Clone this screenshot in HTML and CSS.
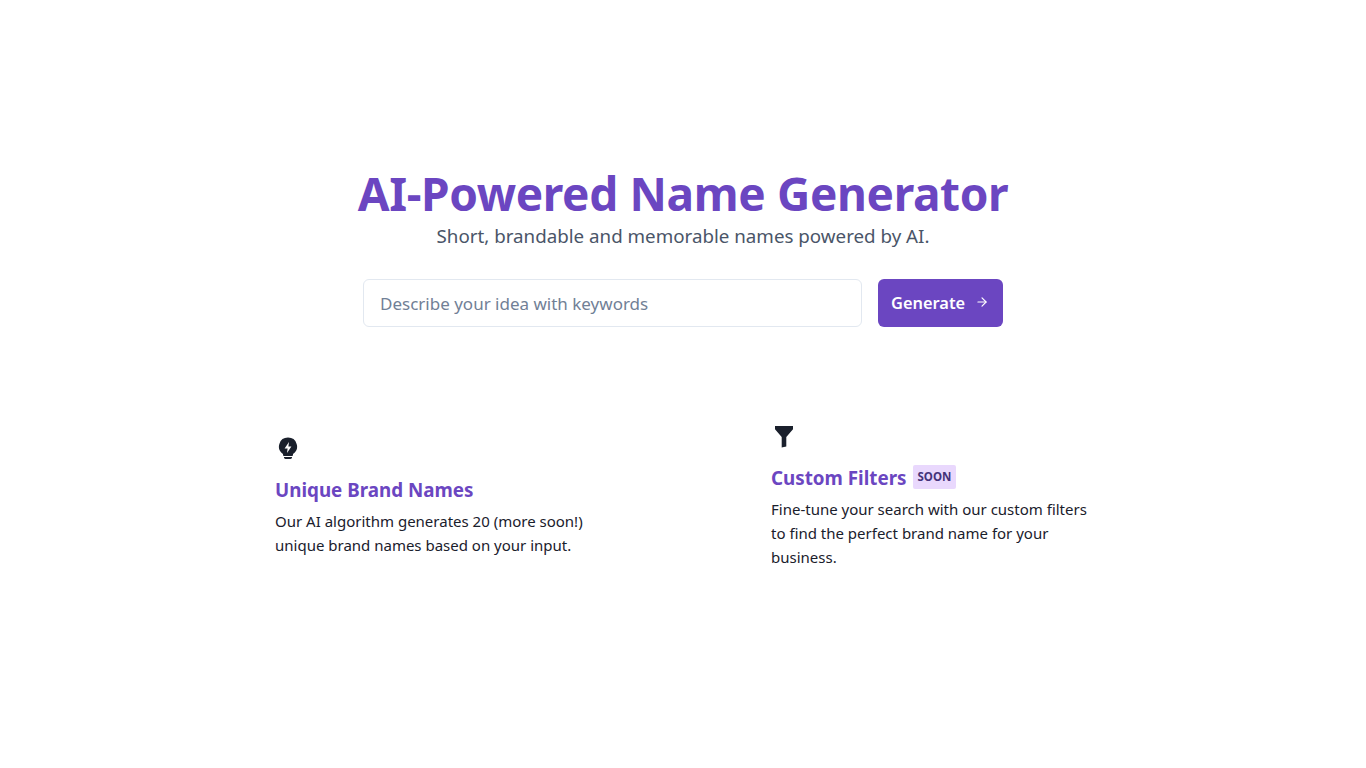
FILE: index.html
```html
<!DOCTYPE html>
<html lang="en">
<head>
<meta charset="UTF-8">
<meta name="viewport" content="width=device-width, initial-scale=1.0">
<title>AI-Powered Name Generator</title>
<link rel="stylesheet" href="styles.css">
</head>
<body>

<main class="page">
<section class="hero">
<h1>AI-Powered Name Generator</h1>
<p class="tagline">Short, brandable and memorable names powered by AI.</p>
<form class="search">
<input type="text" placeholder="Describe your idea with keywords">
<button type="button">Generate
<svg viewBox="0 0 24 24" width="14" height="14" fill="none" stroke="currentColor" stroke-width="2" stroke-linecap="round" stroke-linejoin="round"><path d="M5 12h14"/><path d="M12 5l7 7-7 7"/></svg>
</button>
</form>
</section>

<section class="features">
<div class="feature">
<svg class="icon" viewBox="-1 0 24 24" width="24" height="24" fill="currentColor"><path d="M12 1.5a9 9 0 0 0-5 16.5v1a1 1 0 0 0 1 1h8a1 1 0 0 0 1-1v-1a9 9 0 0 0-5-16.5zm1 4.5-.6 4.5h3L11 17l.6-4.500h-3L13 6z"/><path d="M8 21h8v.6a1.4 1.4 0 0 1-1.4 1.4H9.400A1.4 1.4 0 0 1 8 21.600V21z"/></svg>
<h3>Unique Brand Names</h3>
<p>Our AI algorithm generates 20 (more soon!)<br>unique brand names based on your input.</p>
</div>
<div class="feature">
<svg class="icon" viewBox="-0.5 0 24 24" width="24" height="24" fill="currentColor"><path d="M3.500 2h18v3.200L14.800 13v9.500l-4.600 1V13L3.500 5.200V2z"/></svg>
<h3>Custom Filters <span class="badge">Soon</span></h3>
<p>Fine-tune your search with our custom filters to find the perfect brand name for your business.</p>
</div>
</section>
</main>

</body>
</html>
```

FILE: styles.css
```css
body {
margin: 0;
background: #fff;
font-family: "Noto Sans", "Open Sans", sans-serif;
color: #1a202c;
}
.page {
min-height: 768px;
box-sizing: border-box;
padding-top: 163px;
}
.hero {
text-align: center;
}
h1 {
margin: 0;
font-size: 46px;
line-height: 60px;
font-weight: 700;
letter-spacing: -0.36px;
color: #6b46c1;
}
.tagline {
margin: 0;
font-size: 18.75px;
line-height: 25px;
color: #4a5568;
}
.search {
display: flex;
justify-content: center;
gap: 16px;
margin-top: 31px;
}
input {
width: 499px;
height: 48px;
box-sizing: border-box;
padding: 0 16px;
border: 1px solid #e2e8f0;
border-radius: 6px;
font-family: inherit;
font-size: 17px;
color: #1a202c;
}
input::placeholder {
color: #718096;
}
button {
display: flex;
align-items: center;
gap: 10px;
width: 125px;
height: 48px;
padding: 0 13px 2px;
background-color: #6b46c1;
color: white;
border: none;
border-radius: 6px;
font-family: inherit;
font-size: 16.4px;
font-weight: 600;
cursor: pointer;
}
.features {
display: grid;
grid-template-columns: 496px 330px;
align-items: center;
width: 826px;
margin: 97px 0 0 275px;
}
.icon {
display: block;
}
h3 {
display: flex;
align-items: center;
gap: 6px;
margin: 15px 0 4px;
font-size: 18.8px;
line-height: 30px;
font-weight: 700;
color: #6b46c1;
}
.feature p {
margin: 0;
font-size: 15px;
line-height: 24px;
}
.badge {
margin-top: -2px;
padding: 0 5px;
background: #e9d8fd;
border-radius: 2px;
font-size: 11.5px;
line-height: 24px;
font-weight: 700;
text-transform: uppercase;
color: #44337a;
}
```
